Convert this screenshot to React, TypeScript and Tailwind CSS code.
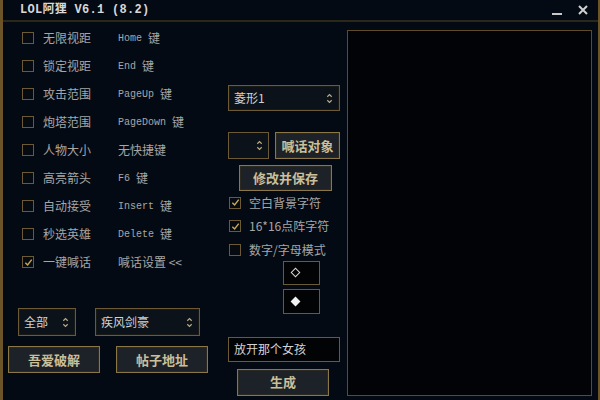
import React from 'react'

const FONT = { fontFamily: '"Noto Sans CJK SC", "Liberation Sans", sans-serif' }
const MONO = { fontFamily: '"Liberation Mono", "Noto Sans CJK SC", monospace' }

const OPTIONS = [
  { label: '无限视距', key: 'Home', checked: false },
  { label: '锁定视距', key: 'End', checked: false },
  { label: '攻击范围', key: 'PageUp', checked: false },
  { label: '炮塔范围', key: 'PageDown', checked: false },
  { label: '人物大小', key: '', text: '无快捷键', checked: false },
  { label: '高亮箭头', key: 'F6', checked: false },
  { label: '自动接受', key: 'Insert', checked: false },
  { label: '秒选英雄', key: 'Delete', checked: false },
  { label: '一键喊话', key: '', text: '喊话设置 <<', checked: true },
]

function Check({ checked }: { checked: boolean }) {
  return (
    <span className="flex h-[12px] w-[12px] items-center justify-center border border-[#6b5a35] bg-[#060b12]">
      {checked && (
        <svg viewBox="0 0 10 10" className="h-[9px] w-[9px]" fill="none" stroke="#c9a84f" strokeWidth="1.6">
          <path d="M1.5 5.2 L4 7.8 L8.6 1.8" />
        </svg>
      )}
    </span>
  )
}

function Arrows() {
  return (
    <svg viewBox="0 0 8 14" className="h-[13px] w-[7px]" fill="none" stroke="#bfae7e" strokeWidth="1.3">
      <path d="M1.5 5 L4 2.5 L6.5 5" />
      <path d="M1.5 9 L4 11.5 L6.5 9" />
    </svg>
  )
}

function Select({ label, className }: { label: string; className: string }) {
  return (
    <div
      className={`flex items-center justify-between border border-[#6b5a35] bg-[#0c121a] pl-[5px] pr-[6px] text-[12px] text-[#d2d2d2] shadow-[inset_0_0_0_1px_#1a1a14] ${className}`}
      style={FONT}
    >
      <span>{label}</span>
      <Arrows />
    </div>
  )
}

function Button({ label, className }: { label: string; className: string }) {
  return (
    <button
      className={`flex items-center justify-center border border-[#8a7646] bg-[#1d2228] text-[13px] font-bold text-[#cbbf98] shadow-[inset_0_0_0_1px_#2c2a20] ${className}`}
      style={FONT}
    >
      {label}
    </button>
  )
}

export default function App() {
  return (
    <div className="flex h-[400px] w-[600px] flex-col overflow-hidden border-l-[3px] border-r-[2px] border-[#6b5428] bg-[#040a13]" style={FONT}>
      {/* Title bar */}
      <div className="flex h-[22px] shrink-0 items-center justify-between border-b-[2px] border-[#2b2819] pl-[17px] pr-[10px]">
        <span className="text-[12px] font-bold tracking-[0.3px] text-[#d8d8d8]" style={MONO}>
          LOL阿狸 V6.1 (8.2)
        </span>
        <div className="flex items-center gap-[16px]">
          <span className="mt-[8px] h-[2px] w-[10px] bg-[#c8c8c8]" />
          <svg viewBox="0 0 10 10" className="h-[10px] w-[10px]" stroke="#d0d0d0" strokeWidth="2">
            <path d="M1 1 L9 9 M9 1 L1 9" />
          </svg>
        </div>
      </div>

      <div className="flex min-h-0 flex-1">
        {/* Left column */}
        <div className="flex w-[225px] shrink-0 flex-col pt-[2px]">
          <div className="flex flex-col">
            {OPTIONS.map((o) => (
              <div key={o.label} className="flex h-[28px] items-center pl-[19px] text-[#a6a6a6]">
                <Check checked={o.checked} />
                <span className="ml-[9px] w-[75px] text-[12px]">{o.label}</span>
                {o.key ? (
                  <span className="flex items-center">
                    <span className="text-[10px]" style={MONO}>{o.key}</span>
                    <span className="ml-[6px] text-[12px]">键</span>
                  </span>
                ) : (
                  <span className="text-[12px]">{o.text}</span>
                )}
              </div>
            ))}
          </div>
          <div className="mt-[32px] flex pl-[15px]">
            <Select label="全部" className="h-[28px] w-[58px]" />
            <Select label="疾风剑豪" className="ml-[19px] h-[28px] w-[105px]" />
          </div>
          <div className="mt-[10px] flex pl-[5px]">
            <Button label="吾爱破解" className="h-[27px] w-[92px]" />
            <Button label="帖子地址" className="ml-[16px] h-[27px] w-[92px]" />
          </div>
        </div>

        {/* Middle column */}
        <div className="flex w-[119px] shrink-0 flex-col pt-[63px]">
          <Select label="菱形1" className="h-[26px] w-[112px]" />
          <div className="mt-[21px] flex">
            <div className="flex h-[27px] w-[41px] items-center justify-end border border-[#6b5a35] bg-[#0c121a] pr-[5px]">
              <Arrows />
            </div>
            <Button label="喊话对象" className="ml-[6px] h-[27px] w-[65px]" />
          </div>
          <Button label="修改并保存" className="ml-[11px] mt-[6px] h-[26px] w-[93px]" />
          <div className="flex flex-col pl-[1px]">
            {[
              { t: '空白背景字符', c: true },
              { t: '16*16点阵字符', c: true },
              { t: '数字/字母模式', c: false },
            ].map((r) => (
              <div key={r.t} className="flex h-[23.5px] items-center">
                <Check checked={r.c} />
                <span className="ml-[8px] text-[12px] text-[#a6a6a6]">{r.t}</span>
              </div>
            ))}
          </div>
          <div className="ml-[55px] mt-[-1px] flex flex-col gap-[4px]">
            <div className="flex h-[24px] w-[37px] items-center border border-[#6b5a35] bg-[#020305] pl-[8px]">
              <span className="h-[7px] w-[7px] rotate-45 border border-[#d8d8d8]" />
            </div>
            <div className="flex h-[25px] w-[37px] items-center border border-[#6b5a35] bg-[#020305] pl-[8px]">
              <span className="h-[7px] w-[7px] rotate-45 bg-[#f2f2f2]" />
            </div>
          </div>
          <div className="mt-[23px] flex h-[25px] w-[112px] items-center border border-[#6b5a35] bg-[#020305] pl-[5px] text-[12px] text-[#d2d2d2]">
            放开那个女孩
          </div>
          <Button label="生成" className="ml-[9px] mt-[7px] h-[27px] w-[92px]" />
        </div>

        {/* Preview panel */}
        <div className="mb-[4px] mt-[8px] w-[245px] border border-[#5e4c28] bg-[#020306]" />
      </div>
    </div>
  )
}
